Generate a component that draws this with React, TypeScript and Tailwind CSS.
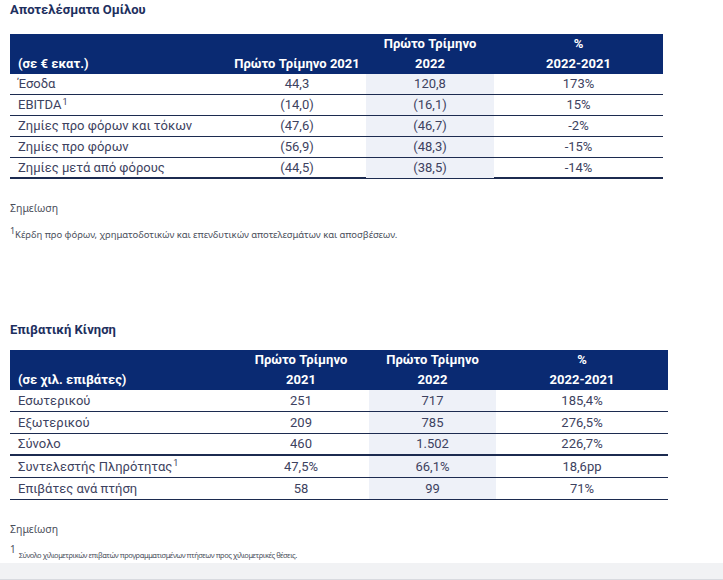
import React from 'react';

type Row = {
  label: string;
  sup?: boolean;
  a: string;
  b: string;
  pct: string;
  heavy?: boolean; // thicker rule under the row
};

const groupRows: Row[] = [
  { label: 'Έσοδα', a: '44,3', b: '120,8', pct: '173%' },
  { label: 'EBITDA', sup: true, a: '(14,0)', b: '(16,1)', pct: '15%' },
  { label: 'Ζημίες προ φόρων και τόκων', a: '(47,6)', b: '(46,7)', pct: '-2%' },
  { label: 'Ζημίες προ φόρων', a: '(56,9)', b: '(48,3)', pct: '-15%' },
  { label: 'Ζημίες μετά από φόρους', a: '(44,5)', b: '(38,5)', pct: '-14%', heavy: true },
];

const paxRows: Row[] = [
  { label: 'Εσωτερικού', a: '251', b: '717', pct: '185,4%' },
  { label: 'Εξωτερικού', a: '209', b: '785', pct: '276,5%' },
  { label: 'Σύνολο', a: '460', b: '1.502', pct: '226,7%', heavy: true },
  { label: 'Συντελεστής Πληρότητας', sup: true, a: '47,5%', b: '66,1%', pct: '18,6pp' },
  { label: 'Επιβάτες ανά πτήση', a: '58', b: '99', pct: '71%' },
];

// Section title
const Title = ({ children }: { children: React.ReactNode }) => (
  <h2 className="pl-[10px] text-[13px] font-bold leading-[20px] text-[#1d2f5e]">{children}</h2>
);

// Note block under each table
const Note = ({ children, small }: { children: React.ReactNode; small?: boolean }) => (
  <div className="pl-[10px] font-['Noto_Sans',sans-serif] text-[#4b4f5c]">
    <p className="text-[10.5px] leading-[16px]">Σημείωση</p>
    {small ? (
      <p className="mt-[12px] text-[7.5px] leading-[12px] tracking-[-0.45px]">
        <sup className="mr-[3px] text-[10px] tracking-normal">1</sup>
        {children}
      </p>
    ) : (
      <p className="mt-[12px] text-[9.5px] leading-[14px] tracking-[-0.05px]">
        <sup className="text-[9px]">1</sup>
        {children}
      </p>
    )}
  </div>
);

interface TableProps {
  cols: string;
  width: string;
  head: { label: string; a: [string, string]; b: [string, string] };
  rows: Row[];
  rowH: string;
}

function DataTable({ cols, width, head, rows, rowH }: TableProps) {
  return (
    <div className={`ml-[10px] ${width}`}>
      {/* Header band */}
      <div className={`grid ${cols} bg-[#0a2a72] text-[13px] font-bold leading-[20px] text-white`}>
        <div className="flex flex-col justify-end pl-2">
          <span>{head.label}</span>
        </div>
        <div className="flex flex-col items-center justify-end">
          {head.a[0] && <span>{head.a[0]}</span>}
          <span>{head.a[1]}</span>
        </div>
        <div className="flex flex-col items-center justify-end">
          <span>{head.b[0]}</span>
          <span>{head.b[1]}</span>
        </div>
        <div className="flex flex-col items-center justify-end">
          <span>%</span>
          <span>2022-2021</span>
        </div>
      </div>

      {rows.map((r) => (
        <div
          key={r.label}
          className={`grid ${cols} ${rowH} text-[13px] leading-[20px] text-[#3d4260] ${
            r.heavy ? 'border-b-2' : 'border-b'
          } border-[#1c2b50]`}
        >
          <div className="flex items-center pl-2">
            <span>
              {r.label}
              {r.sup && <sup className="ml-[1px] text-[9px]">1</sup>}
            </span>
          </div>
          <div className="flex items-center justify-center">{r.a}</div>
          <div className="flex items-center justify-center bg-[#eef1f8]">{r.b}</div>
          <div className="flex items-center justify-center">{r.pct}</div>
        </div>
      ))}
    </div>
  );
}

export default function App() {
  return (
    <div className="relative h-[580px] w-[723px] overflow-hidden bg-white font-['Roboto',sans-serif]">
      <div>
        <Title>Αποτελέσματα Ομίλου</Title>
      </div>

      <div className="mt-[14px]">
        <DataTable
          cols="grid-cols-[218px_138px_128px_169px]"
          width="w-[653px]"
          head={{ label: '(σε € εκατ.)', a: ['', 'Πρώτο Τρίμηνο 2021'], b: ['Πρώτο Τρίμηνο', '2022'] }}
          rows={groupRows}
          rowH="h-[21px]"
        />
      </div>

      <div className="mt-[21px]">
        <Note>Κέρδη προ φόρων, χρηματοδοτικών και επενδυτικών αποτελεσμάτων και αποσβέσεων.</Note>
      </div>

      <div className="mt-[78px]">
        <Title>Επιβατική Κίνηση</Title>
      </div>

      <div className="mt-[10px]">
        <DataTable
          cols="grid-cols-[223px_136px_127px_172px]"
          width="w-[658px]"
          head={{ label: '(σε χιλ. επιβάτες)', a: ['Πρώτο Τρίμηνο', '2021'], b: ['Πρώτο Τρίμηνο', '2022'] }}
          rows={paxRows}
          rowH="h-[22px]"
        />
      </div>

      <div className="mt-[21px]">
        <Note small>Σύνολο χιλιομετρικών επιβατών προγραμματισμένων πτήσεων προς χιλιομετρικές θέσεις.</Note>
      </div>

      {/* grey strip at the bottom edge */}
      <div className="absolute bottom-0 left-0 h-[17px] w-full border-b border-[#d8dadf] bg-[#f1f2f4]" />
    </div>
  );
}
